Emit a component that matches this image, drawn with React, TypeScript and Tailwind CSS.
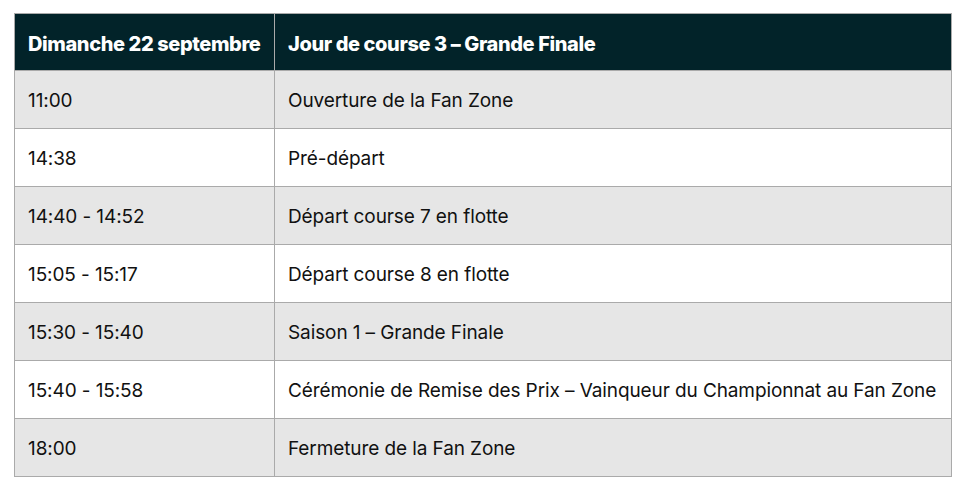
import React from 'react';

const rows: [string, string][] = [
  ['11:00', 'Ouverture de la Fan Zone'],
  ['14:38', 'Pré-départ'],
  ['14:40 - 14:52', 'Départ course 7 en flotte'],
  ['15:05 - 15:17', 'Départ course 8 en flotte'],
  ['15:30 - 15:40', 'Saison 1 – Grande Finale'],
  ['15:40 - 15:58', 'Cérémonie de Remise des Prix – Vainqueur du Championnat au Fan Zone'],
  ['18:00', 'Fermeture de la Fan Zone'],
];

export default function App() {
  return (
    <div className="bg-white w-[975px] h-[494px] pt-[13px] pl-[14px] font-['Inter',sans-serif]">
      <table className="border-collapse w-[938px] text-[19px] tracking-[-0.1px] text-[#111]">
        <thead>
          <tr className="bg-[#022329] text-white h-[57px]">
            <th className="w-[260px] text-left text-[20px] font-extrabold tracking-[-0.4px] px-[13px] pt-[3px] border border-[#aaa]">Dimanche 22 septembre</th>
            <th className="text-left text-[20px] font-extrabold tracking-[-0.4px] px-[13px] pt-[3px] border border-[#aaa]">Jour de course 3 – Grande Finale</th>
          </tr>
        </thead>
        <tbody>
          {rows.map(([time, label], i) => (
            <tr key={time} className={i % 2 === 0 ? 'bg-[#e6e6e6] h-[58px]' : 'bg-white h-[58px]'}>
              <td className="px-[13px] pt-[3px] border border-[#aaa]">{time}</td>
              <td className="px-[13px] pt-[3px] border border-[#aaa]">{label}</td>
            </tr>
          ))}
        </tbody>
      </table>
    </div>
  );
}
